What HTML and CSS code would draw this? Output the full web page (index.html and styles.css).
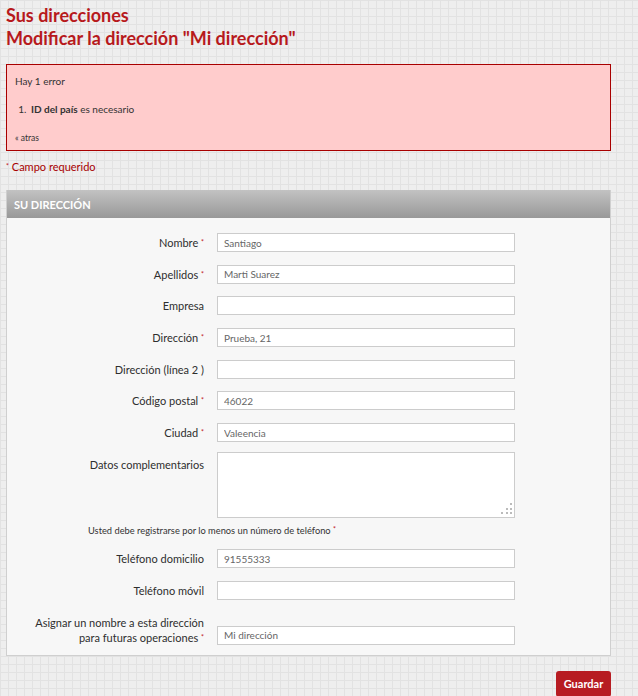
FILE: index.html
```html
<!DOCTYPE html>
<html lang="es">
<head>
<meta charset="utf-8">
<title>Sus direcciones</title>
<link rel="stylesheet" href="styles.css">
</head>
<body>
<div class="page">
  <h1 class="title">Sus direcciones<br>Modificar la dirección "Mi dirección"</h1>

  <div class="error">
    <p class="error-count">Hay 1 error</p>
    <ol class="error-list">
      <li><b>ID del país</b> es necesario</li>
    </ol>
    <a class="back" href="#">« atras</a>
  </div>

  <p class="required-note"><sup>*</sup> Campo requerido</p>

  <form class="box">
    <h3 class="box-head">SU DIRECCIÓN</h3>
    <div class="box-body">
      <div class="row"><label class="lbl">Nombre <sup>*</sup></label><input class="field" value="Santiago"></div>
      <div class="row"><label class="lbl">Apellidos <sup>*</sup></label><input class="field" value="Marti Suarez"></div>
      <div class="row"><label class="lbl">Empresa</label><input class="field" value=""></div>
      <div class="row"><label class="lbl">Dirección <sup>*</sup></label><input class="field" value="Prueba, 21"></div>
      <div class="row"><label class="lbl">Dirección (línea 2 )</label><input class="field" value=""></div>
      <div class="row"><label class="lbl">Código postal <sup>*</sup></label><input class="field" value="46022"></div>
      <div class="row"><label class="lbl">Ciudad <sup>*</sup></label><input class="field" value="Valeencia"></div>
      <div class="row row-top"><label class="lbl">Datos complementarios</label><span class="area-wrap"><textarea class="field area"></textarea></span></div>
      <p class="phone-note">Usted debe registrarse por lo menos un número de teléfono <sup>*</sup></p>
      <div class="row"><label class="lbl">Teléfono domicilio</label><input class="field" value="91555333"></div>
      <div class="row"><label class="lbl">Teléfono móvil</label><input class="field" value=""></div>
      <div class="row row-last"><label class="lbl">Asignar un nombre a esta dirección<br>para futuras operaciones <sup>*</sup></label><input class="field" value="Mi dirección"></div>
    </div>
  </form>

  <div class="actions"><button class="btn" type="button">Guardar</button></div>
</div>
</body>
</html>
```

FILE: styles.css
```css
html, body {
  margin: 0;
  padding: 0;
}
body {
  background-color: #eeeeee;
  background-image:
    linear-gradient(to right, #e2e2e2 1px, transparent 1px),
    linear-gradient(to bottom, #e2e2e2 1px, transparent 1px);
  background-size: 8px 8px;
  font-family: Lato, "Noto Sans", sans-serif;
  color: #333;
  font-size: 11px;
}
.page {
  width: 605px;
  padding: 4px 0 0 6px;
}
.title {
  margin: 0;
  font-size: 18px;
  line-height: 23px;
  color: #b7191c;
  font-weight: bold;
}
.error {
  margin-top: 14px;
  background: #ffcccc;
  border: 1px solid #a80000;
  padding: 9px 8px 6px 8px;
  height: 70px;
}
.error-count {
  margin: 0;
  font-size: 10px;
  line-height: 14px;
}
.error-list {
  margin: 14px 0 0 0;
  padding-left: 14px;
  font-size: 10px;
  line-height: 14px;
}
.error-list li { padding-left: 2px; }
.back {
  display: block;
  margin-top: 17px;
  font-size: 8.5px;
  line-height: 10px;
  color: #333;
  text-decoration: none;
}
.required-note {
  margin: 9px 0 0 0;
  color: #a80000;
  font-size: 11px;
  line-height: 14px;
}
sup {
  color: #c0141a;
  font-size: 7px;
  vertical-align: 2px;
  line-height: 0;
}
.box {
  margin-top: 16px;
  border: 1px solid #cfcfcf;
  border-top: 0;
  background: #f7f7f7;
}
.box-head {
  margin: 0;
  height: 28px;
  line-height: 29px;
  padding-left: 7px;
  color: #ffffff;
  font-size: 11px;
  font-weight: bold;
  background: linear-gradient(to bottom, #c2c2c2, #989898);
}
.box-body {
  padding: 15px 0 10px 0;
  display: flex;
  flex-direction: column;
  gap: 12.7px;
}
.row {
  display: flex;
  align-items: center;
}
.row-top { align-items: flex-start; margin-top: -3px; }
.lbl {
  width: 197px;
  text-align: right;
  padding-right: 13px;
  font-size: 11px;
  line-height: 15px;
  color: #2e2e2e;
}
.row-top .lbl { padding-top: 5px; }
.field {
  box-sizing: border-box;
  width: 298px;
  height: 19px;
  margin: 0;
  border: 1px solid #cccccc;
  background: #ffffff;
  padding: 0 6px;
  font-family: inherit;
  font-size: 10px;
  color: #666;
  outline: none;
}
.area-wrap {
  position: relative;
  display: block;
  width: 298px;
  height: 66px;
}
.area {
  display: block;
  height: 66px;
  resize: none;
}
.area-wrap::after {
  content: "";
  position: absolute;
  right: 3px;
  bottom: 4px;
  width: 2px;
  height: 2px;
  background: #bbbbbb;
  box-shadow: -4px 0 0 #bbbbbb, -9px 0 0 #bbbbbb, 0 -4px 0 #bbbbbb, -4px -4px 0 #bbbbbb, 0 -9px 0 #bbbbbb;
}
.phone-note {
  margin: -7px 0 -1px 0;
  padding-left: 81px;
  white-space: nowrap;
  font-size: 9.3px;
  line-height: 14px;
}
.row-last { align-items: flex-end; margin-top: 2px; }
.actions {
  display: flex;
  justify-content: flex-end;
  margin-top: 15px;
}
.btn {
  width: 55px;
  height: 26px;
  border: 0;
  border-radius: 3px;
  background: #b71c22;
  color: #fff;
  font-family: inherit;
  font-weight: bold;
  font-size: 11px;
}
```
